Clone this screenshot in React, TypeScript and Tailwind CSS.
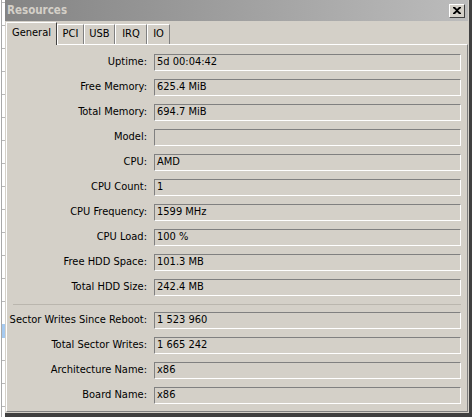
const rows: { label: string; value: string }[] = [
  { label: "Uptime", value: "5d 00:04:42" },
  { label: "Free Memory", value: "625.4 MiB" },
  { label: "Total Memory", value: "694.7 MiB" },
  { label: "Model", value: "" },
  { label: "CPU", value: "AMD" },
  { label: "CPU Count", value: "1" },
  { label: "CPU Frequency", value: "1599 MHz" },
  { label: "CPU Load", value: "100 %" },
  { label: "Free HDD Space", value: "101.3 MB" },
  { label: "Total HDD Size", value: "242.4 MB" },
];

const rows2: { label: string; value: string }[] = [
  { label: "Sector Writes Since Reboot", value: "1 523 960" },
  { label: "Total Sector Writes", value: "1 665 242" },
  { label: "Architecture Name", value: "x86" },
  { label: "Board Name", value: "x86" },
];

const tabs = [
  { name: "PCI", w: "w-[27px]" },
  { name: "USB", w: "w-[31px]" },
  { name: "IRQ", w: "w-[32px]" },
  { name: "IO", w: "w-[23px]" },
];

function Field({ label, value }: { label: string; value: string }) {
  return (
    <div className="flex items-center h-[17px]">
      <div className="w-[147px] shrink-0 text-right pr-[7px] whitespace-nowrap">{label}:</div>
      <div className="flex-1 h-[17px] border-t border-l border-[#808080] border-r border-b border-r-white border-b-white flex items-center pl-[2px] whitespace-nowrap">
        {value}
      </div>
    </div>
  );
}

export default function App() {
  return (
    <div
      className="flex w-[472px] h-[417px] bg-white text-[11px] text-black overflow-hidden"
      style={{ fontFamily: '"DejaVu Sans Condensed", "Liberation Sans", Arial, sans-serif' }}
    >
      {/* window behind */}
      <div className="w-[5px] border-l border-l-white flex flex-col">
        <div className="flex-1 border-l border-[#a8a8a8] flex flex-col gap-[22px] pt-[2px]">
          {Array.from({ length: 18 }).map((_, i) => (
            <div key={i} className={i === 14 ? "h-[14px] bg-[#a6caf0]" : "h-px w-[3px] bg-[#b8b8b8]"} />
          ))}
        </div>
      </div>

      <div className="flex-1 flex flex-col bg-[#d4d0c8] border-r-[3px] border-b-[4px] border-[#404040]">
        {/* title bar */}
        <div className="h-[21px] mr-px flex items-center justify-between pl-[2px] pr-[3px] bg-gradient-to-r from-[#848484] to-[#bcbcbc]">
          <span className="font-bold text-[11.5px] text-[#d4d0c8]">Resources</span>
          <div className="w-[16px] h-[14px] bg-[#d4d0c8] border-t border-l border-white border-r border-b border-r-[#404040] border-b-[#404040] flex items-center justify-center">
            <svg width="8" height="7" viewBox="0 0 8 7">
              <path d="M0 0h2l2 2 2-2h2v1L5 3.5 8 6v1H6L4 5 2 7H0V6l3-2.5L0 1z" fill="#000" />
            </svg>
          </div>
        </div>

        {/* tabs */}
        <div className="h-[23px] flex items-end pl-px">
          <div className="relative z-10 w-[51px] h-[23px] -mb-[1px] bg-[#d4d0c8] border-t border-l border-white border-r border-r-[#404040] flex items-center justify-center pb-[2px]">
            General
          </div>
          {tabs.map((t) => (
            <div
              key={t.name}
              className={`${t.w} h-[20px] bg-[#d4d0c8] border-t border-l border-white border-r border-r-[#808080] flex items-center justify-center`}
            >
              {t.name}
            </div>
          ))}
        </div>

        {/* panel */}
        <div className="flex-1 ml-px mr-[1px] mb-px border-t border-l border-white border-r border-b border-r-[#808080] border-b-[#808080] pt-[9px] pr-[6px] flex flex-col gap-[8px]">
          {rows.map((r) => (
            <Field key={r.label} label={r.label} value={r.value} />
          ))}
          <div className="h-px -mb-px ml-[6px] bg-[#bab6ae]" />
          {rows2.map((r) => (
            <Field key={r.label} label={r.label} value={r.value} />
          ))}
        </div>
      </div>
    </div>
  );
}
